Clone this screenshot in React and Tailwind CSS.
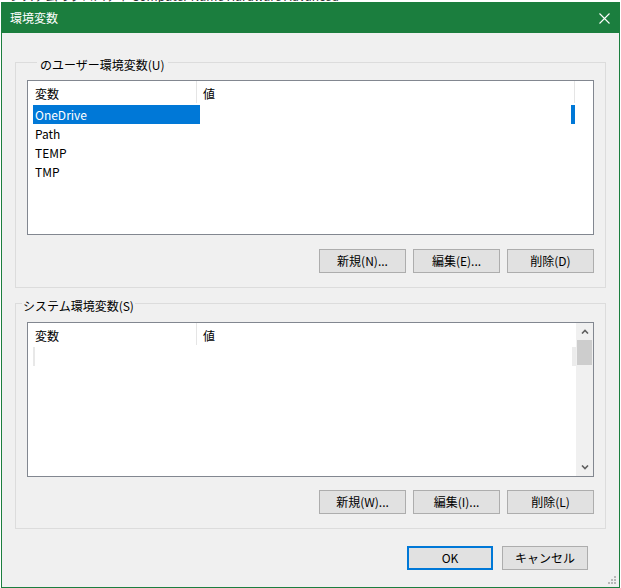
import React from 'react'

const font = "font-['Noto_Sans_CJK_JP','Noto_Sans',sans-serif]"

function Btn({ children, primary }) {
  return (
    <button
      className={`w-[86px] h-[24px] flex items-center justify-center text-[12px] text-black bg-[#e1e1e1] ${
        primary ? 'border-2 border-[#0078d7]' : 'border border-[#adadad]'
      }`}
    >
      {children}
    </button>
  )
}

function ListHeader({ endLine }) {
  return (
    <div className="flex h-[22px] text-[12px] text-black">
      <div className="w-[169px] pl-[7px] pt-[3px] flex items-center border-r border-[#e5e5e5]">変数</div>
      <div className={`flex-1 pl-[6px] pt-[3px] flex items-center ${endLine ? 'border-r border-[#e5e5e5] mr-[18px]' : ''}`}>値</div>
    </div>
  )
}

function Chevron({ up }) {
  return (
    <svg width="8" height="5" viewBox="0 0 8 5">
      <polyline
        points={up ? '1,4.5 4,1.5 7,4.5' : '1,0.5 4,3.5 7,0.5'}
        fill="none"
        stroke="#606060"
        strokeWidth="1.6"
      />
    </svg>
  )
}

function Group({ legend, legendClass, children, buttons, listTop, btnTop }) {
  return (
    <div className="border border-[#dcdcdc] px-[11px] pb-[14px]">
      <div className={`-mt-[8px] h-4 w-fit bg-[#f0f0f0] leading-[20px] text-[12px] text-black ${legendClass}`}>{legend}</div>
      <div className={`${listTop} h-[155px] border border-[#828790] bg-white`}>{children}</div>
      <div className={`${btnTop} flex justify-end gap-[7px]`}>
        {buttons.map(b => (
          <button key={b} className="w-[87px] h-[24px] flex items-center justify-center text-[12px] text-black bg-[#e1e1e1] border border-[#adadad]">
            {b}
          </button>
        ))}
      </div>
    </div>
  )
}

export default function App() {
  const rows = ['OneDrive', 'Path', 'TEMP', 'TMP']

  return (
    <div className={`w-[621px] h-[588px] bg-white overflow-hidden ${font}`}>
      {/* window behind, only a sliver shows */}
      <div className="h-[2px] overflow-hidden pl-[10px]">
        <div className="-mt-[12px] text-[12px] leading-4 text-[#333]">システムのプロパティ Computer Name Hardware Advanced</div>
      </div>

      <div className="relative ml-px w-[619px] h-[586px] border border-[#1b7e3e] bg-[#f0f0f0] flex flex-col">
        {/* title bar */}
        <div className="h-[30px] bg-[#1b7e3e] flex items-center justify-between pl-2 pr-[9px] shrink-0">
          <span className="text-[12px] text-white">環境変数</span>
          <svg width="11" height="11" viewBox="0 0 11 11">
            <path d="M0.5 0.5 L10.5 10.5 M10.5 0.5 L0.5 10.5" stroke="#fff" strokeWidth="1.1" />
          </svg>
        </div>

        <div className="px-[13px] pt-[29px] flex flex-col">
          <Group
            legend="のユーザー環境変数(U)"
            legendClass="ml-[10px] px-[3px]"
            listTop="mt-[9px]"
            btnTop="mt-[14px]"
            buttons={['新規(N)...', '編集(E)...', '削除(D)']}
          >
            <ListHeader endLine />
            <div className="mt-[2px] pl-[5px] text-[12px]">
              {rows.map((r, i) => (
                <div key={r} className="flex h-[19px]">
                  <div className={`w-[167px] pl-[2px] pt-px flex items-center ${i === 0 ? 'bg-[#0078d7] text-white' : 'text-black'}`}>{r}</div>
                  <div className="flex-1" />
                  {i === 0 && <div className="w-[4px] bg-[#0078d7] mr-[18px]" />}
                </div>
              ))}
            </div>
          </Group>

          <div className="mt-[15px]">
            <Group
              legend="システム環境変数(S)"
              legendClass="-ml-[5px] px-[1px]"
              listTop="mt-[10px]"
              btnTop="mt-[13px]"
              buttons={['新規(W)...', '編集(I)...', '削除(L)']}
            >
              <div className="flex h-full">
                <div className="flex-1 flex flex-col">
                  <ListHeader />
                  <div className="mt-[2px] flex h-[19px]">
                    <div className="ml-[5px] w-[2px] bg-[#e8e8e8]" />
                    <div className="flex-1" />
                    <div className="w-[4px] bg-[#ececec]" />
                  </div>
                </div>
                <div className="w-[17px] bg-[#f0f0f0] flex flex-col">
                  <div className="h-[17px] flex items-center justify-center">
                    <Chevron up />
                  </div>
                  <div className="mx-px h-[25px] bg-[#cdcdcd]" />
                  <div className="flex-1" />
                  <div className="h-[17px] flex items-center justify-center">
                    <Chevron />
                  </div>
                </div>
              </div>
            </Group>
          </div>

          <div className="mt-[17px] mr-[18px] flex justify-end gap-[9px]">
            <Btn primary>OK</Btn>
            <Btn>キャンセル</Btn>
          </div>
        </div>

        {/* size grip */}
        <svg className="absolute right-[2px] bottom-[2px]" width="10" height="10" viewBox="0 0 10 10">
          {[[8, 2], [8, 5], [5, 5], [8, 8], [5, 8], [2, 8]].map(([x, y]) => (
            <rect key={`${x}-${y}`} x={x - 1} y={y - 1} width="2" height="2" fill="#b8b8b8" />
          ))}
        </svg>
      </div>
    </div>
  )
}
